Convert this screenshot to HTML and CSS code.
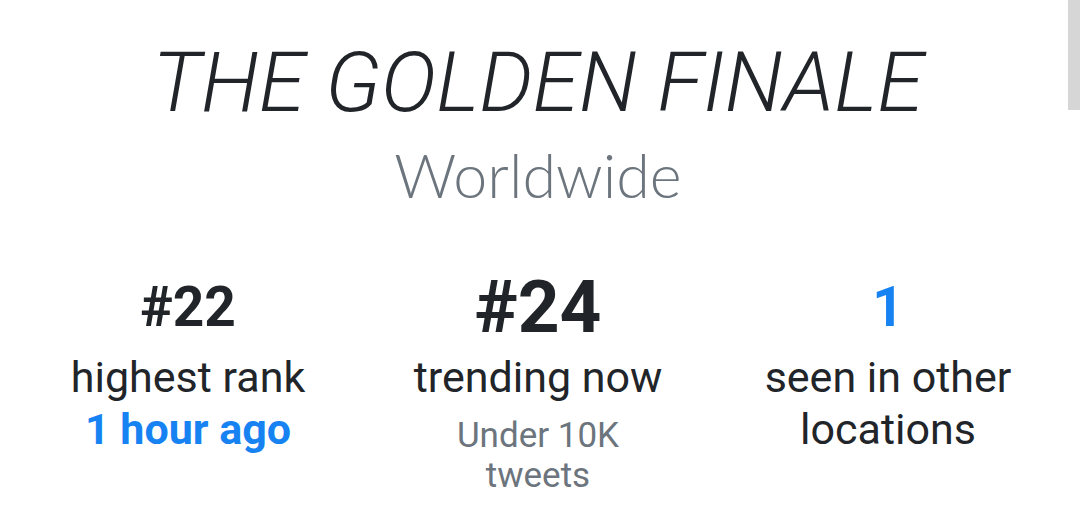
FILE: index.html
```html
<!DOCTYPE html>
<html>
<head>
<meta charset="utf-8">
<link rel="stylesheet" href="styles.css">
</head>
<body>
<div class="page">
  <h1 class="title">THE GOLDEN FINALE</h1>
  <div class="location">Worldwide</div>
  <div class="stats">
    <div class="stat">
      <div class="num">#22</div>
      <div class="label">highest rank</div>
      <div class="sub-blue">1 hour ago</div>
    </div>
    <div class="stat">
      <div class="num big">#24</div>
      <div class="label">trending now</div>
      <div class="sub-gray">Under 10K<br>tweets</div>
    </div>
    <div class="stat">
      <div class="num blue">1</div>
      <div class="label">seen in other<br>locations</div>
    </div>
  </div>
</div>
<div class="scroll-thumb"></div>
</body>
</html>
```
FILE: styles.css
```css
html, body {
  margin: 0;
  padding: 0;
  background: #ffffff;
  overflow: hidden;
}
body {
  font-family: Roboto, "Liberation Sans", sans-serif;
  color: #212529;
  width: 1080px;
  height: 524px;
}
.page {
  width: 1050px;
  padding-left: 13px;
  text-align: center;
}
.title {
  margin: 0;
  padding-top: 31px;
  font-weight: 300;
  font-style: italic;
  font-size: 84px;
  line-height: 104px;
}
.location {
  font-family: Lato, Roboto, sans-serif;
  font-weight: 300;
  font-size: 61px;
  line-height: 80px;
  color: #6c757d;
}
.stats {
  display: flex;
  margin-top: 57px;
}
.stat {
  flex: 1;
}
.num {
  font-weight: 700;
  font-size: 55px;
  line-height: 70px;
  margin-bottom: 9px;
}
.num.big {
  font-size: 73px;
}
.num.blue {
  color: #1783f2;
}
.label {
  font-size: 43px;
  line-height: 52px;
}
.sub-blue {
  font-weight: 700;
  font-size: 43px;
  line-height: 52px;
  color: #1783f2;
}
.sub-gray {
  margin-top: 13px;
  font-size: 35px;
  line-height: 40px;
  color: #6c757d;
}
.scroll-thumb {
  position: absolute;
  top: 0;
  right: 0;
  width: 12px;
  height: 110px;
  background: #d6d6d6;
}
```
